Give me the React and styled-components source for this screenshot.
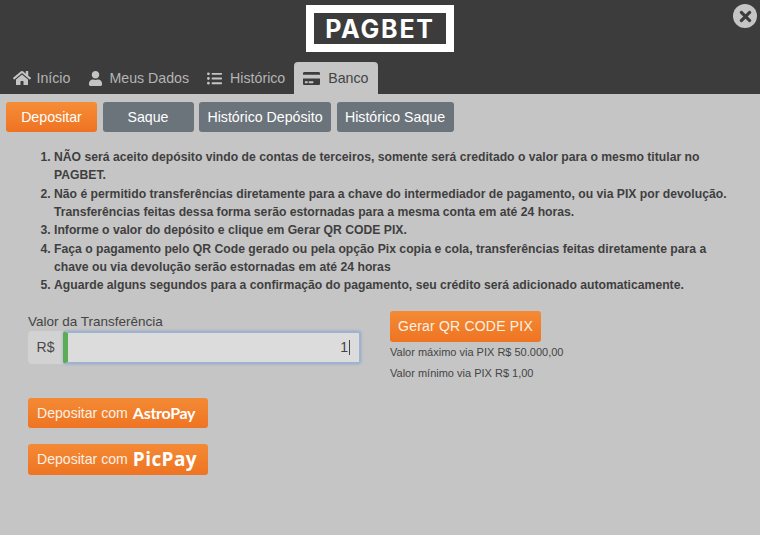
import React from 'react';
import styled, { createGlobalStyle } from 'styled-components';
import { FaHome, FaUser, FaListUl, FaCreditCard, FaTimes } from 'react-icons/fa';

const tabs = [
  { label: 'Início', icon: <FaHome size={18} />, gap: 6 },
  { label: 'Meus Dados', icon: <FaUser size={15} />, gap: 6 },
  { label: 'Histórico', icon: <FaListUl size={15} />, gap: 8 },
  { label: 'Banco', icon: <FaCreditCard size={17} />, gap: 8, active: true }
];

const actions = [
  { label: 'Depositar', width: 91, active: true },
  { label: 'Saque', width: 91 },
  { label: 'Histórico Depósito', width: 132 },
  { label: 'Histórico Saque', width: 117 }
];

const rules = [
  'NÃO será aceito depósito vindo de contas de terceiros, somente será creditado o valor para o mesmo titular no PAGBET.',
  'Não é permitido transferências diretamente para a chave do intermediador de pagamento, ou via PIX por devolução. Transferências feitas dessa forma serão estornadas para a mesma conta em até 24 horas.',
  'Informe o valor do depósito e clique em Gerar QR CODE PIX.',
  'Faça o pagamento pelo QR Code gerado ou pela opção Pix copia e cola, transferências feitas diretamente para a chave ou via devolução serão estornadas em até 24 horas',
  'Aguarde alguns segundos para a confirmação do pagamento, seu crédito será adicionado automaticamente.'
];

const GlobalStyle = createGlobalStyle`
  html, body {
    margin: 0;
    padding: 0;
    background: #c5c5c5;
  }
  body {
    font-family: "Liberation Sans", Arial, sans-serif;
  }
`;

const Page = styled.div`
  position: relative;
  width: 760px;
  height: 535px;
  overflow: hidden;
  background: #c5c5c5;
`;

const Header = styled.header`
  height: 94px;
  box-sizing: border-box;
  padding-top: 5px;
  background: #3c3c3c;
  display: flex;
  flex-direction: column;
  justify-content: space-between;
`;

const Logo = styled.div`
  align-self: center;
  width: 148px;
  height: 47px;
  box-sizing: border-box;
  border: 8px solid #fff;
  display: flex;
  align-items: center;
  justify-content: center;
  color: #fff;
  font-family: "Inter", "Liberation Sans", sans-serif;
  font-size: 25px;
  font-weight: 700;
  letter-spacing: 1.8px;
`;

const CloseButton = styled.div`
  position: absolute;
  top: 4px;
  right: 3px;
  width: 24px;
  height: 24px;
  border-radius: 50%;
  background: #c5c5c5;
  color: #3c3c3c;
  display: flex;
  align-items: center;
  justify-content: center;
`;

const TabBar = styled.nav`
  display: flex;
  align-items: flex-end;
  padding-left: 3.5px;
`;

const Tab = styled.div`
  height: 32px;
  box-sizing: border-box;
  padding: 0 9px;
  display: flex;
  align-items: center;
  gap: ${(p) => p.$gap}px;
  font-size: 14.2px;
  border-radius: 4px 4px 0 0;
  color: ${(p) => (p.$active ? '#444' : '#b4b4b4')};
  background: ${(p) => (p.$active ? '#c5c5c5' : 'transparent')};
  svg {
    color: ${(p) => (p.$active ? '#3c3c3c' : '#c4c4c4')};
  }
`;

const ActionRow = styled.div`
  display: flex;
  gap: 5.5px;
  padding: 8px 6px 0;
`;

const ActionButton = styled.div`
  width: ${(p) => p.$width}px;
  height: 30px;
  border-radius: 3px;
  display: flex;
  align-items: center;
  justify-content: center;
  font-size: 14.2px;
  color: #fff;
  background: ${(p) => (p.$active ? 'linear-gradient(#f68d36, #ee7322)' : '#6b737b')};
`;

const Rules = styled.ol`
  margin: 16px 0 0;
  padding: 0 20px 0 54px;
  font-size: 12.2px;
  font-weight: 700;
  line-height: 18.35px;
  color: #3f3f3f;
`;

const FormRow = styled.div`
  display: flex;
  padding: 16px 0 0 28px;
`;

const ValueColumn = styled.div`
  width: 362px;
`;

const FieldLabel = styled.div`
  margin-top: 3px;
  font-size: 13.5px;
  line-height: 15px;
  color: #444;
`;

const InputGroup = styled.div`
  width: 333px;
  height: 33px;
  margin-top: 2px;
  display: flex;
  background: #d2d2d2;
  border-radius: 4px;
`;

const Addon = styled.div`
  width: 35px;
  display: flex;
  align-items: center;
  justify-content: center;
  font-size: 14px;
  color: #4a4a4a;
`;

const ValueInput = styled.div`
  flex: 1;
  box-sizing: border-box;
  display: flex;
  align-items: center;
  justify-content: flex-end;
  padding-right: 9px;
  font-size: 14px;
  color: #444;
  background: #dcdcdc;
  border: 2px solid #9fb3cf;
  border-left: 5px solid #5cab57;
  border-radius: 3px;
  box-shadow: 0 0 3px rgba(110, 145, 200, 0.6);
`;

const Caret = styled.span`
  width: 1px;
  height: 15px;
  margin-left: 1px;
  background: #444;
`;

const PixColumn = styled.div`
  display: flex;
  flex-direction: column;
  align-items: flex-start;
`;

const OrangeButton = styled.div`
  height: ${(p) => p.$height || 30}px;
  width: ${(p) => p.$width}px;
  border-radius: 3px;
  box-sizing: border-box;
  display: flex;
  align-items: center;
  font-size: 14px;
  color: #fdf0e4;
  background: linear-gradient(#f48a35, #ee7422);
`;

const QrButton = styled(OrangeButton)`
  justify-content: center;
  letter-spacing: 0.2px;
`;

const PixNote = styled.div`
  margin-top: ${(p) => p.$top}px;
  font-size: 11px;
  line-height: 13px;
  color: #444;
`;

const GatewayList = styled.div`
  display: flex;
  flex-direction: column;
  gap: 16px;
  padding: 0 0 0 28px;
  margin-top: 18px;
`;

const GatewayButton = styled(OrangeButton)`
  padding-left: 9px;
  gap: 5px;
  font-size: 14.1px;
`;

const AstroBrand = styled.span`
  font-family: "Lato", "Liberation Sans", sans-serif;
  font-size: 16px;
  font-weight: 700;
  letter-spacing: -0.3px;
  color: #fff;
`;

const PicBrand = styled.span`
  font-family: "Open Sans", "Liberation Sans", sans-serif;
  font-size: 19px;
  font-weight: 700;
  color: #fff;
  letter-spacing: 0.4px;
`;

const App = () => {
  const getTabs = () => tabs.map((item, idx) => (
    <Tab key={idx} $active={item.active} $gap={item.gap}>{item.icon}{item.label}</Tab>
  ));

  const getActions = () => actions.map((item, idx) => (
    <ActionButton key={idx} $width={item.width} $active={item.active}>{item.label}</ActionButton>
  ));

  return (
    <Page>
      <GlobalStyle />
      <Header>
        <Logo>PAGBET</Logo>
        <TabBar>{getTabs()}</TabBar>
      </Header>
      <CloseButton><FaTimes size={17} /></CloseButton>
      <ActionRow>{getActions()}</ActionRow>
      <Rules>
        {rules.map((rule, idx) => <li key={idx}>{rule}</li>)}
      </Rules>
      <FormRow>
        <ValueColumn>
          <FieldLabel>Valor da Transferência</FieldLabel>
          <InputGroup>
            <Addon>R$</Addon>
            <ValueInput>1<Caret /></ValueInput>
          </InputGroup>
        </ValueColumn>
        <PixColumn>
          <QrButton $width={151} $height={31}>Gerar QR CODE PIX</QrButton>
          <PixNote $top={4}>Valor máximo via PIX R$ 50.000,00</PixNote>
          <PixNote $top={8}>Valor mínimo via PIX R$ 1,00</PixNote>
        </PixColumn>
      </FormRow>
      <GatewayList>
        <GatewayButton $width={180}>Depositar com <AstroBrand>AstroPay</AstroBrand></GatewayButton>
        <GatewayButton $width={180} $height={31}>Depositar com <PicBrand>PicPay</PicBrand></GatewayButton>
      </GatewayList>
    </Page>
  );
};

export default App;
